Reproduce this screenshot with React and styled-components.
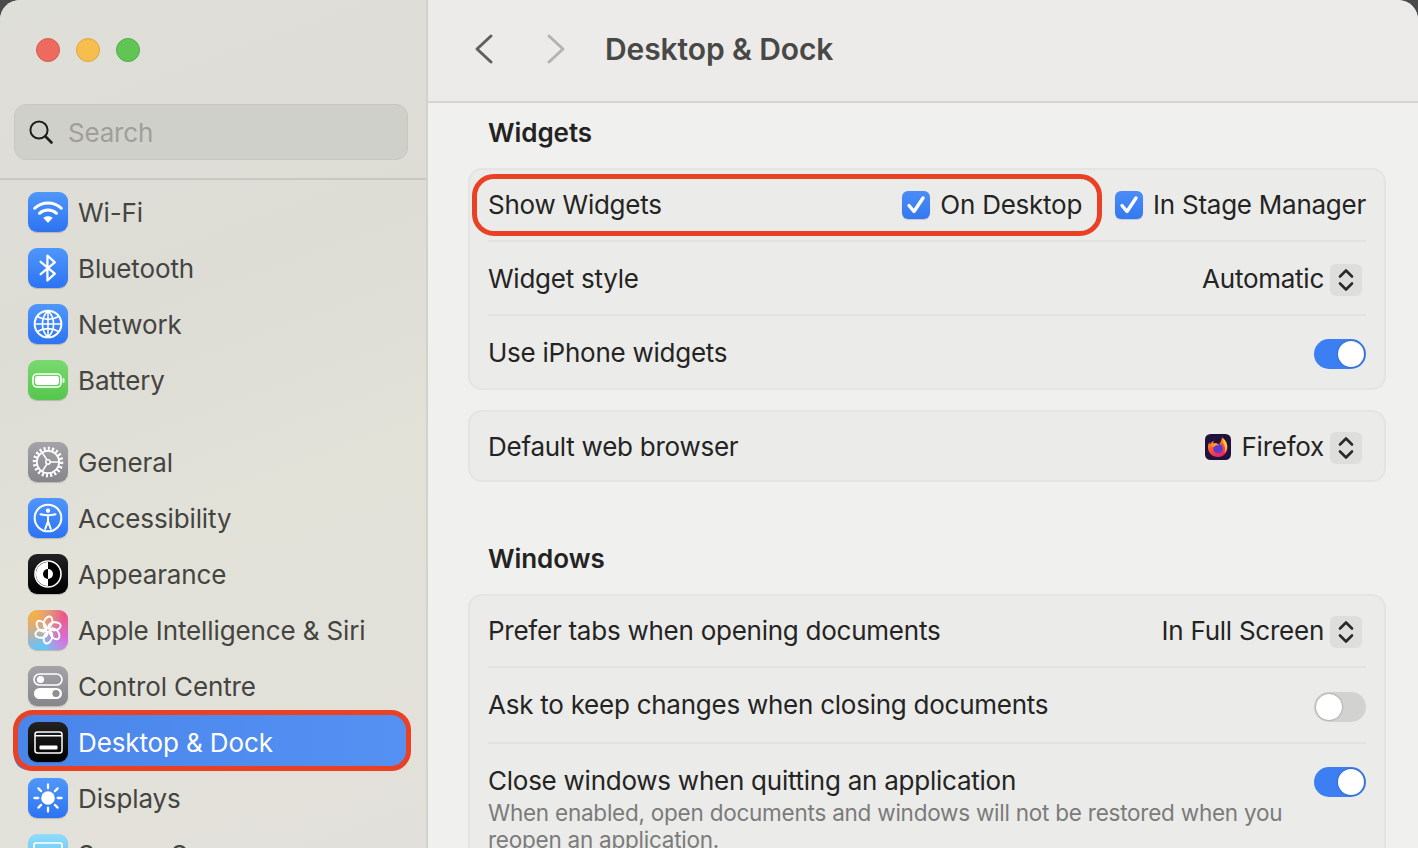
import React from 'react'
import styled, {createGlobalStyle} from 'styled-components'

const GlobalStyle = createGlobalStyle`
  html, body {
    margin: 0;
    padding: 0;
    height: 100%;
    overflow: hidden;
    background: #4a4a4a;
    font-family: Inter, "Noto Sans", "Liberation Sans", sans-serif;
    -webkit-font-smoothing: antialiased;
  }
  * { box-sizing: border-box; }
`

const Window = styled.div`
  display: flex;
  width: 1418px;
  height: 848px;
  overflow: hidden;
  border-radius: 20px 20px 0 0;
  background: #f0f0ef;
`

const Sidebar = styled.aside`
  width: 428px;
  flex-shrink: 0;
  height: 848px;
  overflow: hidden;
  background: linear-gradient(160deg, #dfdfd9 0%, #dddcd5 35%, #e2e2d9 60%, #e2e0da 100%);
  border-right: 2px solid #d2d1cc;
`

const TrafficLights = styled.div`
  display: flex;
  gap: 16px;
  padding: 38px 0 0 36px;
  height: 104px;
`

const Light = styled.span`
  width: 24px;
  height: 24px;
  border-radius: 50%;
  background: ${p => p.$color};
  border: 1px solid ${p => p.$edge};
`

const SearchBox = styled.div`
  display: flex;
  align-items: center;
  gap: 14px;
  width: 394px;
  height: 56px;
  margin-left: 14px;
  padding-left: 13px;
  border-radius: 12px;
  background: #d0d0ca;
  border: 1px solid #c8c8c2;
  color: #9f9f9a;
  font-size: 26px;
  letter-spacing: -0.2px;
`

const SidebarRule = styled.div`
  height: 2px;
  margin-top: 18px;
  background: #c9c8c2;
`

const NavList = styled.nav`
  display: flex;
  flex-direction: column;
  padding-top: 4px;
`

const NavItem = styled.div`
  position: relative;
  display: flex;
  align-items: center;
  gap: 10px;
  flex-shrink: 0;
  width: 394px;
  height: 56px;
  margin-left: 14px;
  margin-top: ${p => (p.$gap ? '26px' : '0')};
  padding-left: 14px;
  border-radius: 14px;
  color: ${p => (p.$active ? '#ffffff' : '#444441')};
  background: ${p => (p.$active ? 'linear-gradient(90deg, #4a85ea, #5590f3)' : 'transparent')};
  font-size: 26px;
  letter-spacing: -0.12px;
  white-space: nowrap;
`

const RedRing = styled.span`
  position: absolute;
  border: 5px solid #ea4024;
  border-radius: ${p => p.$radius};
  top: ${p => p.$top};
  left: ${p => p.$left};
  right: ${p => p.$right};
  bottom: ${p => p.$bottom};
  pointer-events: none;
`

const IconTile = styled.span`
  display: flex;
  align-items: center;
  justify-content: center;
  flex-shrink: 0;
  width: 40px;
  height: 40px;
  border-radius: 9px;
  background: ${p => p.$bg};
  box-shadow: 0 1px 1px rgba(0, 0, 0, 0.18);
`

const Main = styled.main`
  flex: 1;
  min-width: 0;
  height: 848px;
  overflow: hidden;
`

const TitleBar = styled.header`
  display: flex;
  align-items: center;
  height: 103px;
  padding: 0 0 4px 44px;
  background: #ecebe9;
  border-bottom: 2px solid #d6d5d3;
`

const NavButton = styled.span`
  display: flex;
  width: 24px;
  margin-right: ${p => p.$space};
`

const PageTitle = styled.h1`
  margin: 0;
  color: #484846;
  font-size: 30px;
  font-weight: 600;
  letter-spacing: -0.1px;
`

const Content = styled.div`
  padding: 0 32px 0 40px;
`

const SectionTitle = styled.h2`
  margin: 0;
  padding-left: 20px;
  height: ${p => p.$height};
  padding-top: ${p => p.$top};
  color: #232322;
  font-size: 26px;
  line-height: 34px;
  font-weight: 600;
  letter-spacing: -0.05px;
`

const Card = styled.section`
  margin-bottom: ${p => p.$below || '0'};
  padding: 0 18px;
  background: #ebebea;
  border: 2px solid #e4e4e3;
  border-radius: 14px;
`

const Row = styled.div`
  position: relative;
  display: flex;
  align-items: ${p => (p.$top ? 'flex-start' : 'center')};
  justify-content: space-between;
  height: ${p => p.$height || '74px'};
  padding-top: ${p => p.$pad || '1px'};
  border-bottom: ${p => (p.$last ? 'none' : '2px solid #e2e2e1')};
  color: #242423;
  font-size: 26px;
  line-height: 34px;
  letter-spacing: -0.25px;
  white-space: nowrap;
`

const Label = styled.span`
  line-height: 34px;
`

const Hint = styled.p`
  margin: 1px 0 0;
  width: 820px;
  color: #7b7b7a;
  font-size: 22.5px;
  line-height: 27px;
  letter-spacing: -0.24px;
  white-space: normal;
`

const Controls = styled.div`
  display: flex;
  align-items: center;
`

const CheckOption = styled.span`
  display: flex;
  align-items: center;
  gap: 10px;
  margin-left: ${p => p.$space || '0'};
`

const CheckBox = styled.span`
  display: flex;
  align-items: center;
  justify-content: center;
  width: 28px;
  height: 28px;
  border-radius: 6px;
  background: linear-gradient(180deg, #4a8df8, #3478f0);
  box-shadow: 0 1px 1px rgba(0, 0, 0, 0.15);
`

const Stepper = styled.span`
  display: flex;
  align-items: center;
  justify-content: center;
  width: 32px;
  height: 32px;
  margin: 2px 4px 0 6px;
  border-radius: 6px;
  background: #dededd;
`

const Toggle = styled.span`
  display: flex;
  justify-content: ${p => (p.$on ? 'flex-end' : 'flex-start')};
  width: 52px;
  height: 30px;
  padding: 2px;
  border-radius: 15px;
  background: ${p => (p.$on ? '#3b7ff2' : '#d2d2d0')};
  margin-top: 3px;
`

const Knob = styled.span`
  width: 26px;
  height: 26px;
  border-radius: 50%;
  background: #ffffff;
  box-shadow: 0 0 2px rgba(0, 0, 0, 0.45);
`

const BrowserIcon = styled.span`
  display: flex;
  margin-right: 11px;
`

const Glyph = ({size = 30, children}) => (
  <svg
    width={size}
    height={size}
    viewBox="0 0 30 30"
    fill="none"
    stroke="#fff"
    strokeWidth="2"
    strokeLinecap="round"
    strokeLinejoin="round"
  >
    {children}
  </svg>
)

const WifiIcon = () => (
  <Glyph size={32}>
    <path d="M2.500 11.500c7-6.500 18-6.500 25 0" strokeWidth="2.800" />
    <path d="M7 16.200c4.500-4 11.500-4 16 0" strokeWidth="2.800" />
    <path d="M15 24.500l-3.800-3.900c2.300-1.400 5.300-1.400 7.600 0z" fill="#fff" strokeWidth="1" />
  </Glyph>
)

const BluetoothIcon = () => (
  <Glyph size={34}>
    <path d="M8.500 9.500L21 20l-6.500 6V4L21 10 8.500 20.500" />
  </Glyph>
)

const NetworkIcon = () => (
  <Glyph size={32}>
    <circle cx="15" cy="15" r="12.500" strokeWidth="1.900" />
    <path d="M15 2.500c-7 7-7 18 0 25M15 2.500c7 7 7 18 0 25M15 2.500v25" strokeWidth="1.500" />
    <path d="M5 8c6 3.500 14 3.500 20 0M2.800 15h24.400M5 22c6-3.500 14-3.500 20 0" strokeWidth="1.500" />
  </Glyph>
)

const BatteryIcon = () => (
  <svg width="33" height="15" viewBox="0 0 33 15">
    <rect x="1" y="1" width="28" height="13" rx="4" fill="none" stroke="#fff" strokeWidth="1.600" />
    <rect x="3" y="3" width="24" height="9" rx="2.400" fill="#fff" />
    <rect x="30.500" y="5" width="2" height="5" rx="1" fill="#eafbe6" />
  </svg>
)

const GearIcon = () => (
  <svg width="32" height="32" viewBox="0 0 32 32" fill="none" stroke="#fff">
    <circle cx="16" cy="16" r="13.500" strokeWidth="3.600" strokeDasharray="2.100 2.100" />
    <circle cx="16" cy="16" r="11.200" strokeWidth="1.800" />
    <circle cx="16" cy="16" r="2.200" strokeWidth="1.500" />
    <path d="M18 16h9M15 14L10.200 6.600M15 18l-4.800 7.400" strokeWidth="1.600" />
  </svg>
)

const AccessIcon = () => (
  <Glyph size={32}>
    <circle cx="15" cy="15" r="12.500" strokeWidth="1.900" />
    <circle cx="15" cy="8.200" r="2" fill="#fff" stroke="none" />
    <path d="M8 11.500c4.500 1.300 9.500 1.300 14 0M15 12.600v6M15 18.200l-2.600 7M15 18.200l2.600 7" strokeWidth="1.900" />
  </Glyph>
)

const AppearanceIcon = () => (
  <svg width="32" height="32" viewBox="0 0 32 32">
    <circle cx="16" cy="16" r="13" fill="#000" stroke="#fff" strokeWidth="1.600" />
    <path d="M16 4a12 12 0 0 0 0 24z" fill="#fff" />
    <path d="M16 11a5 5 0 0 0 0 10z" fill="#000" />
    <path d="M16 11a5 5 0 0 1 0 10z" fill="#fff" />
  </svg>
)

const siriPetals = [0, 60, 120, 180, 240, 300]

const SiriIcon = () => (
  <svg width="32" height="32" viewBox="0 0 32 32" fill="none" stroke="#fff" strokeWidth="1.900">
    {siriPetals.map(angle => (
      <ellipse
        key={angle}
        cx="16"
        cy="8.500"
        rx="4"
        ry="6.200"
        transform={`rotate(${angle} 16 16) rotate(22 16 8.500)`}
      />
    ))}
  </svg>
)

const ControlIcon = () => (
  <svg width="32" height="32" viewBox="0 0 32 32">
    <rect x="2" y="4" width="28" height="11" rx="5.500" fill="none" stroke="#fff" strokeWidth="1.600" />
    <circle cx="8.500" cy="9.500" r="3.600" fill="#fff" />
    <rect x="2" y="18" width="28" height="11" rx="5.500" fill="#fff" />
    <circle cx="24" cy="23.500" r="3.600" fill="#8e8e93" />
  </svg>
)

const DockIcon = () => (
  <svg width="29" height="23" viewBox="0 0 29 23">
    <rect x="1" y="1" width="27" height="21" rx="2.500" fill="none" stroke="#fff" strokeWidth="1.500" />
    <rect x="1" y="4" width="27" height="1.500" fill="#fff" />
    <rect x="5.500" y="14.500" width="18" height="4" rx="1" fill="#fff" />
  </svg>
)

const SunIcon = () => (
  <Glyph size={34}>
    <circle cx="15" cy="15" r="6" fill="#fff" stroke="none" />
    <path d="M15 3v3.400M15 23.600V27M3 15h3.400M23.600 15H27M6.500 6.500l2.400 2.400M21.100 21.100l2.400 2.400M6.500 23.500l2.400-2.400M21.100 8.900l2.400-2.400" />
  </Glyph>
)

const ScreenSaverIcon = () => (
  <svg width="30" height="24" viewBox="0 0 30 24" fill="none" stroke="#fff" strokeWidth="1.700">
    <rect x="1" y="1" width="28" height="22" rx="2" />
  </svg>
)

const SearchIcon = () => (
  <svg width="26" height="26" viewBox="0 0 26 26" fill="none" stroke="#1e1e1d">
    <circle cx="11" cy="11" r="8.600" strokeWidth="2" />
    <path d="M17.500 17.500l6 6" strokeWidth="2.600" strokeLinecap="round" />
  </svg>
)

const Chevron = ({color, flip}) => (
  <svg width="24" height="32" viewBox="0 0 24 32" fill="none">
    <path
      d={flip ? 'M5 3l14 13L5 29' : 'M19 3L5 16l14 13'}
      stroke={color}
      strokeWidth="3"
      strokeLinecap="round"
      strokeLinejoin="round"
    />
  </svg>
)

const TickIcon = () => (
  <svg width="22" height="22" viewBox="0 0 22 22" fill="none">
    <path
      d="M4 11.500l5 6L18 4"
      stroke="#fff"
      strokeWidth="3.400"
      strokeLinecap="round"
      strokeLinejoin="round"
    />
  </svg>
)

const UpDownIcon = () => (
  <svg width="18" height="26" viewBox="0 0 18 26" fill="none">
    <path
      d="M3 9.500L9 3.500l6 6M3 16.500l6 6 6-6"
      stroke="#2a2a29"
      strokeWidth="2.600"
      strokeLinecap="round"
      strokeLinejoin="round"
    />
  </svg>
)

const FirefoxIcon = () => (
  <svg width="26" height="26" viewBox="0 0 26 26">
    <defs>
      <linearGradient id="foxBody" x1="0.2" y1="0" x2="0.6" y2="1">
        <stop offset="0" stopColor="#ffb02e" />
        <stop offset="0.5" stopColor="#ff5b2e" />
        <stop offset="1" stopColor="#e3206a" />
      </linearGradient>
    </defs>
    <rect width="26" height="26" rx="5.500" fill="#20123a" />
    <path
      d="M17 2.500c.4 2 1.600 2.600 3 4.200 2 2.200 2.800 5 2.400 8-.6 4.800-4.600 8.300-9.600 8.300-5.400 0-9.800-4.200-9.800-9.500 0-2 .4-3.600 1.300-5.200.1 1 .5 1.600 1 2 .6-1.800 2-3 3.800-3.300-.8 1-.9 1.700-.6 2.400 1.600-.8 4.200-.5 5.300 1.200 1.600-1.800 3.200-4.800 3.200-8.100z"
      fill="url(#foxBody)"
    />
    <path d="M17.800 4c2.800 2.400 4.400 5 4.300 8.800-.1 2.400-1 4.400-2.600 6 1-3 .8-6-.6-8.600-.8-1.600-1.200-3.800-1.100-6.200z" fill="#ffc93a" />
    <circle cx="13" cy="14.500" r="4.800" fill="#5b3bd0" />
    <path d="M6 11c2.600-1.600 6.400-1.600 8.200.4-2.600-.4-4.200.2-5.200 1.600-1.200-.2-2.200-.8-3-2z" fill="#ff9a2e" />
  </svg>
)

const blueTile = 'linear-gradient(180deg, #4f97fb, #2d73f2)'
const greyTile = 'linear-gradient(180deg, #a3a3a8, #85858b)'
const blackTile = 'linear-gradient(180deg, #222, #000)'
const siriTile = `radial-gradient(circle at 12% 8%, #f8b13f 0, transparent 62%),
  radial-gradient(circle at 92% 12%, #f0508a 0, transparent 58%),
  radial-gradient(circle at 96% 68%, #d56ff0 0, transparent 52%),
  radial-gradient(circle at 35% 100%, #5acbfa 0, transparent 62%),
  #bba3c4`

const navGroups = [
  [
    {name: 'Wi-Fi', bg: blueTile, Icon: WifiIcon},
    {name: 'Bluetooth', bg: blueTile, Icon: BluetoothIcon},
    {name: 'Network', bg: blueTile, Icon: NetworkIcon},
    {name: 'Battery', bg: 'linear-gradient(180deg, #79da70, #55c64e)', Icon: BatteryIcon},
  ],
  [
    {name: 'General', bg: greyTile, Icon: GearIcon},
    {name: 'Accessibility', bg: blueTile, Icon: AccessIcon},
    {name: 'Appearance', bg: blackTile, Icon: AppearanceIcon},
    {name: 'Apple Intelligence & Siri', bg: siriTile, Icon: SiriIcon},
    {name: 'Control Centre', bg: greyTile, Icon: ControlIcon},
    {name: 'Desktop & Dock', bg: blackTile, Icon: DockIcon, active: true},
    {name: 'Displays', bg: blueTile, Icon: SunIcon},
    {name: 'Screen Saver', bg: 'linear-gradient(180deg, #8fdcfb, #5cb8ee)', Icon: ScreenSaverIcon},
  ],
]

const SelectValue = ({children}) => (
  <Controls>
    {children}
    <Stepper>
      <UpDownIcon />
    </Stepper>
  </Controls>
)

const App = () => (
  <>
    <GlobalStyle />
    <Window>
      <Sidebar>
        <TrafficLights>
          <Light $color="#ee6a5f" $edge="#d9584e" />
          <Light $color="#f6be4f" $edge="#dfa63c" />
          <Light $color="#61c554" $edge="#50ae45" />
        </TrafficLights>
        <SearchBox>
          <SearchIcon />
          Search
        </SearchBox>
        <SidebarRule />
        <NavList>
          {navGroups.map((group, groupIndex) =>
            group.map(({name, bg, Icon, active}, index) => (
              <NavItem key={name} $active={active} $gap={groupIndex > 0 && index === 0}>
                <IconTile $bg={bg}>
                  <Icon />
                </IconTile>
                {name}
                {active && <RedRing $top="-4px" $left="-1px" $right="-3px" $bottom="-1px" $radius="20px" />}
              </NavItem>
            )),
          )}
        </NavList>
      </Sidebar>
      <Main>
        <TitleBar>
          <NavButton $space="48px">
            <Chevron color="#5f5f5e" />
          </NavButton>
          <NavButton $space="37px">
            <Chevron color="#b3b3b2" flip />
          </NavButton>
          <PageTitle>Desktop &amp; Dock</PageTitle>
        </TitleBar>
        <Content>
          <SectionTitle $height="65px" $top="13px">Widgets</SectionTitle>
          <Card $below="20px">
            <Row $height="72px" $pad="0">
              <Label>Show Widgets</Label>
              <RedRing $top="4px" $left="-16px" $right="264px" $bottom="4px" $radius="22px" />
              <Controls>
                <CheckOption>
                  <CheckBox>
                    <TickIcon />
                  </CheckBox>
                  On Desktop
                </CheckOption>
                <CheckOption $space="33px">
                  <CheckBox>
                    <TickIcon />
                  </CheckBox>
                  In Stage Manager
                </CheckOption>
              </Controls>
            </Row>
            <Row>
              <Label>Widget style</Label>
              <SelectValue>Automatic</SelectValue>
            </Row>
            <Row $last $height="72px">
              <Label>Use iPhone widgets</Label>
              <Toggle $on>
                <Knob />
              </Toggle>
            </Row>
          </Card>
          <Card>
            <Row $last $height="68px">
              <Label>Default web browser</Label>
              <SelectValue>
                <BrowserIcon>
                  <FirefoxIcon />
                </BrowserIcon>
                Firefox
              </SelectValue>
            </Row>
          </Card>
          <SectionTitle $height="112px" $top="60px">Windows</SectionTitle>
          <Card>
            <Row $height="72px" $pad="0">
              <Label>Prefer tabs when opening documents</Label>
              <SelectValue>In Full Screen</SelectValue>
            </Row>
            <Row $height="76px" $pad="0">
              <Label>Ask to keep changes when closing documents</Label>
              <Toggle>
                <Knob />
              </Toggle>
            </Row>
            <Row $last $top $pad="20px" $height="130px">
              <div>
                <Label>Close windows when quitting an application</Label>
                <Hint>When enabled, open documents and windows will not be restored when you reopen an application.</Hint>
              </div>
              <Toggle $on>
                <Knob />
              </Toggle>
            </Row>
          </Card>
        </Content>
      </Main>
    </Window>
  </>
)

export default App
